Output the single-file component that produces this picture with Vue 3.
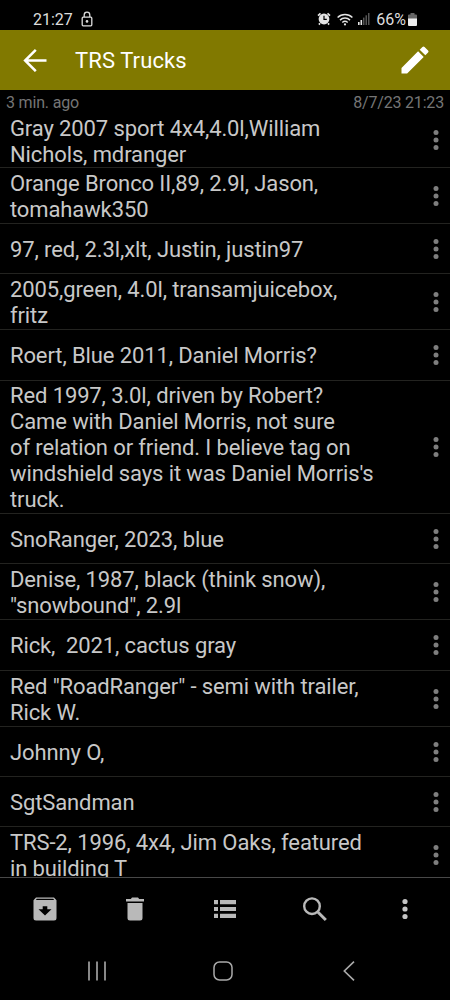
<script setup>
const items = [
  { h: 54, lines: ['Gray 2007 sport 4x4,4.0l,William', 'Nichols, mdranger'] },
  { h: 56, lines: ['Orange Bronco II,89, 2.9l, Jason,', 'tomahawk350'] },
  { h: 50, lines: ['97, red, 2.3l,xlt, Justin, justin97'] },
  { h: 56, lines: ['2005,green, 4.0l, transamjuicebox,', 'fritz'] },
  { h: 51, lines: ['Roert, Blue 2011, Daniel Morris?'] },
  {
    h: 133,
    lines: [
      'Red 1997, 3.0l, driven by Robert?',
      'Came with Daniel Morris, not sure',
      'of relation or friend. I believe tag on',
      "windshield says it was Daniel Morris's",
      'truck.',
    ],
  },
  { h: 50, lines: ['SnoRanger, 2023, blue'] },
  { h: 56, lines: ['Denise, 1987, black (think snow),', '"snowbound", 2.9l'] },
  { h: 51, lines: ['Rick,  2021, cactus gray'] },
  { h: 56, lines: ['Red "RoadRanger" - semi with trailer,', 'Rick W.'] },
  { h: 50, lines: ['Johnny O,'] },
  { h: 50, lines: ['SgtSandman'] },
  { h: 56, lines: ['TRS-2, 1996, 4x4, Jim Oaks, featured', 'in building T'] },
]
</script>

<template>
  <div class="screen">
    <div class="status">
      <span class="clock">21:27</span>
      <svg class="lock" width="12" height="16" viewBox="0 0 12 16">
        <rect x="1.2" y="6.2" width="9.6" height="8.600" rx="1" fill="none" stroke="#ddd" stroke-width="1.3" />
        <path d="M3.2 6V3.900a2.800 2.800 0 0 1 5.600 0V6" fill="none" stroke="#ddd" stroke-width="1.3" />
        <circle cx="6" cy="10.4" r="1.3" fill="#ddd" />
      </svg>
      <span class="grow"></span>
      <svg class="alarm" width="14" height="14" viewBox="0 0 14 14">
        <circle cx="7" cy="7" r="5.4" fill="#e4e4e4" />
        <path d="M1 3.6 3.5 1.3M13 3.6 10.5 1.3M3 11.3 1.9 12.6M11 11.3l1.1 1.3" stroke="#e4e4e4" stroke-width="1.7" />
        <path d="M7 3.8v3.6h2.8" fill="none" stroke="#000" stroke-width="1.2" />
      </svg>
      <svg class="wifi" width="16" height="13" viewBox="0 0 16 13">
        <g fill="none" stroke="#e4e4e4" stroke-width="1.5">
          <path d="M.6 4.5a10.6 10.6 0 0 1 14.8 0" />
          <path d="M3 7.1a7.2 7.2 0 0 1 10 0" />
          <path d="M5.3 9.5a4 4 0 0 1 5.4 0" />
        </g>
        <circle cx="8" cy="11.4" r="1.1" fill="#e4e4e4" />
      </svg>
      <svg class="signal" width="12" height="12" viewBox="0 0 12 12">
        <rect x="0" y="9" width="1.6" height="3" fill="#e4e4e4" />
        <rect x="2.5" y="7" width="1.6" height="5" fill="#e4e4e4" />
        <rect x="5" y="4.6" width="1.5" height="7.4" fill="#555" />
        <rect x="7.5" y="2.3" width="1.5" height="9.7" fill="#555" />
        <rect x="10" y="0" width="1.5" height="12" fill="#555" />
      </svg>
      <span class="percent">66%</span>
      <svg class="battery" width="9" height="13" viewBox="0 0 9 13">
        <path d="M2.5 0h4v1.5H8q1 0 1 1V6H0V2.500q0-1 1-1h1.500z" fill="#666" />
        <path d="M0 5.500h9V12q0 1-1 1H1q-1 0-1-1z" fill="#eee" />
      </svg>
    </div>

    <header class="bar">
      <svg class="back" width="24" height="24" viewBox="0 0 24 24">
        <path d="M23.500 12.500H2.500M12.800 1.800 2.100 12.500l10.700 10.700" fill="none" stroke="#fff" stroke-width="2.500" />
      </svg>
      <h1>TRS Trucks</h1>
      <svg class="pencil" width="36" height="36" viewBox="0 0 24 24">
        <path fill="#fff" d="M3 17.250V21h3.750L17.810 9.940l-3.750-3.750zM20.710 7.040a1 1 0 0 0 0-1.410l-2.340-2.340a1 1 0 0 0-1.410 0l-1.830 1.830 3.750 3.750z" />
      </svg>
    </header>

    <div class="meta"><span>3 min. ago</span><span>8/7/23 21:23</span></div>

    <main class="list">
      <div v-for="(item, i) in items" :key="i" class="row" :style="{ height: item.h + 'px' }">
        <div class="text">
          <div v-for="line in item.lines" :key="line">{{ line }}</div>
        </div>
        <svg class="dots" width="6" height="22" viewBox="0 0 6 22" fill="#7e7e7e">
          <circle cx="3" cy="3.500" r="2.500" />
          <circle cx="3" cy="11" r="2.500" />
          <circle cx="3" cy="18.500" r="2.500" />
        </svg>
      </div>
    </main>

    <nav class="tools">
      <div>
        <svg width="24" height="24" viewBox="0 0 24 24">
          <path fill="#b9b9b9" fill-rule="evenodd" d="M3 .5h18l2.500 2.800V21q0 2.500-2.500 2.500H3Q.5 23.500.5 21V3.300zM3.800 1.700 2.900 2.900h18.200l-.9-1.200zM9.700 9.300v3H5.500L12 18.500l6.500-6.200h-4.200v-3z" />
        </svg>
      </div>
      <div>
        <svg width="18" height="24" viewBox="0 0 18 24" fill="#b9b9b9">
          <path d="M0 2h4.800L6 .5h6L13.200 2H18v2.500H0zM1.500 6h15v15q0 2.500-2.500 2.500H4Q1.500 23.500 1.500 21z" />
        </svg>
      </div>
      <div>
        <svg width="24" height="20" viewBox="0 0 24 20" fill="#b9b9b9">
          <path d="M1 1h4v4.300H1zM7 1h16v4.300H7zM1 8h4v4H1zM7 8h16v4H7zM1 14.700h4V19H1zM7 14.700h16V19H7z" />
        </svg>
      </div>
      <div>
        <svg width="26" height="26" viewBox="0 0 26 26" fill="none" stroke="#b9b9b9">
          <circle cx="10" cy="10.200" r="7.800" stroke-width="2.400" />
          <path d="m15.800 16 8 8" stroke-width="3" />
        </svg>
      </div>
      <div>
        <svg width="6" height="22" viewBox="0 0 6 22" fill="#c4c4c4">
          <circle cx="3" cy="3.500" r="2.600" />
          <circle cx="3" cy="11" r="2.600" />
          <circle cx="3" cy="18.500" r="2.600" />
        </svg>
      </div>
    </nav>

    <nav class="system">
      <svg width="20" height="20" viewBox="0 0 20 20">
        <path d="M2 .5v19M10 .5v19M18 .5v19" stroke="#aaa" stroke-width="1.600" />
      </svg>
      <svg width="20" height="20" viewBox="0 0 20 20">
        <rect x="1" y="1" width="18" height="18" rx="5.500" fill="none" stroke="#aaa" stroke-width="1.500" />
      </svg>
      <svg class="prev" width="12" height="20" viewBox="0 0 12 20">
        <path d="M11 .6 1.300 10l9.700 9.400" fill="none" stroke="#aaa" stroke-width="1.600" />
      </svg>
    </nav>
  </div>
</template>

<style>
body {
  background: #000;
}
</style>

<style scoped>
.screen {
  width: 450px;
  height: 1000px;
  display: flex;
  flex-direction: column;
  overflow: hidden;
  background: #000;
  font-family: Roboto, sans-serif;
}
svg {
  display: block;
  flex: none;
}
.status {
  height: 30px;
  flex: none;
  display: flex;
  align-items: center;
  padding: 8px 33px 0 33px;
  box-sizing: border-box;
  color: #ddd;
}
.clock {
  padding-top: 1px;
  font-size: 16px;
  line-height: 20px;
}
.lock {
  margin-left: 8px;
}
.grow {
  flex: 1;
}
.wifi {
  margin-left: 6px;
}
.signal {
  margin-left: 5px;
}
.percent {
  padding-top: 1px;
  margin-left: 6px;
  font-size: 16px;
  line-height: 20px;
}
.battery {
  margin-left: 2px;
}
.bar {
  height: 60px;
  flex: none;
  display: flex;
  align-items: center;
  padding: 0 17px 0 23px;
  background: #817900;
}
h1 {
  flex: 1;
  margin: 2px 0 0 28px;
  font-size: 22px;
  font-weight: 400;
  line-height: 28px;
  letter-spacing: 0.1px;
  color: #fff;
}
.meta {
  height: 24px;
  flex: none;
  display: flex;
  justify-content: space-between;
  box-sizing: border-box;
  padding: 1px 6px 0;
  font-size: 16px;
  line-height: 24px;
  letter-spacing: -0.18px;
  color: #757575;
}
.list {
  height: 763px;
  flex: none;
  overflow: hidden;
}
.row {
  display: flex;
  align-items: center;
  justify-content: space-between;
  box-sizing: border-box;
  padding: 0 11px 0 10px;
  border-bottom: 1px solid #232320;
}
.row:first-child .dots {
  margin-bottom: 2px;
}
.text {
  padding-top: 2px;
  font-size: 22px;
  line-height: 26px;
  letter-spacing: -0.115px;
  color: #c8c8c8;
  white-space: pre;
}
.tools {
  height: 64px;
  flex: none;
  display: grid;
  grid-template-columns: repeat(5, 1fr);
  place-items: center;
  box-sizing: border-box;
  padding-bottom: 2px;
  border-top: 1px solid #484848;
}
.system {
  flex: 1;
  display: flex;
  align-items: center;
  gap: 106px;
  padding: 1px 0 0 87px;
}
.prev {
  margin-left: 4px;
}
</style>
